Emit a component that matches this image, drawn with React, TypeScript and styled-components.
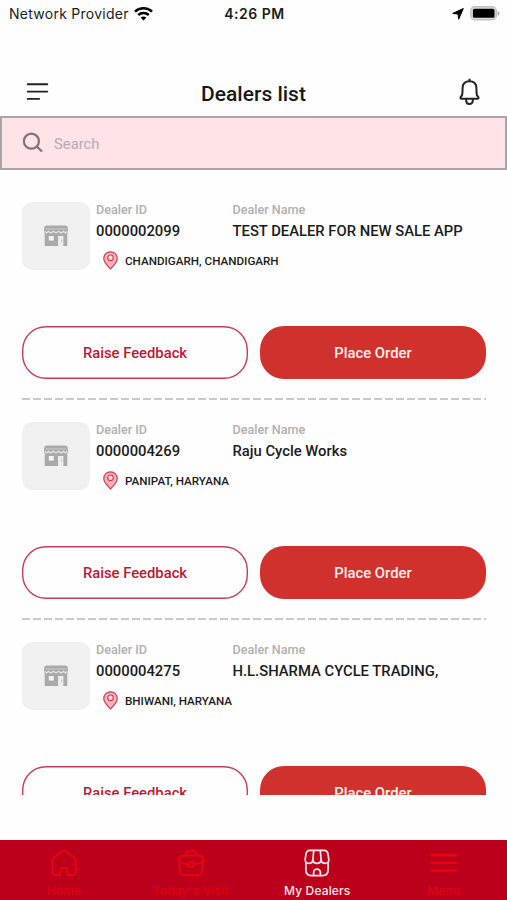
import React from "react";
import styled, { createGlobalStyle } from "styled-components";

const GlobalStyle = createGlobalStyle`
  *, *::before, *::after { box-sizing: border-box; }
  body { margin: 0; background: #fefefe; font-family: Roboto, sans-serif; }
  button, input { font-family: inherit; }
`;

const Screen = styled.div`
  display: flex;
  flex-direction: column;
  width: 507px;
  height: 900px;
  overflow: hidden;
  background: #fefefe;
`;

const StatusBar = styled.div`
  display: grid;
  grid-template-columns: 1fr auto 1fr;
  align-items: center;
  height: 28px;
  flex: none;
  padding: 0 7px 0 9px;
  color: #1b1b1b;
  font: 400 14px/28px Inter, sans-serif;
`;

const Carrier = styled.div`
  display: flex;
  align-items: center;
  gap: 5px;
  letter-spacing: 0.26px;
  white-space: nowrap;
`;

const Clock = styled.div`
  font-weight: 600;
  font-size: 14px;
  letter-spacing: 0.5px;
`;

const StatusIcons = styled.div`
  display: flex;
  align-items: center;
  justify-content: flex-end;
  gap: 6px;
`;

const Header = styled.header`
  display: grid;
  grid-template-columns: 1fr auto 1fr;
  align-items: start;
  flex: none;
  height: 88px;
  padding: 50px 26px 0;

  > :last-child { justify-self: end; }
`;

const IconButton = styled.button`
  display: flex;
  padding: 0;
  border: 0;
  background: none;
  color: #222;
`;

const Title = styled.h1`
  margin: 4px 0 0;
  color: #181818;
  font-size: 21px;
  font-weight: 500;
  line-height: 24px;
`;

const SearchBox = styled.label`
  display: flex;
  align-items: center;
  gap: 10px;
  flex: none;
  height: 54px;
  padding: 0 20px;
  border: 2px solid #aaa4a6;
  background: #ffe3e6;
`;

const SearchInput = styled.input`
  flex: 1;
  padding: 1px 0 0;
  border: 0;
  outline: 0;
  background: none;
  font-size: 14.8px;
  &::placeholder { color: #b9abae; opacity: 1; }
`;

const DealerList = styled.main`
  flex: none;
  height: 625px;
  padding: 10px 21px 0 22px;
  overflow: hidden;
`;

const Card = styled.article`
  display: flex;
  flex-direction: column;
  height: 220px;
  padding-top: 22px;
`;

const Summary = styled.div`
  display: flex;
  gap: 6px;
`;

const Thumb = styled.div`
  display: flex;
  align-items: center;
  justify-content: center;
  flex: none;
  width: 68px;
  height: 68px;
  border-radius: 10px;
  background: #f0f0f0;
`;

const Details = styled.div`
  flex: 1;
  min-width: 0;
`;

const Fields = styled.div`
  display: grid;
  grid-template-columns: 136.5px 1fr;
`;

const Label = styled.div`
  color: #b0b0b0;
  font-size: 12.6px;
  font-weight: 500;
  line-height: 15px;
`;

const Value = styled.div`
  margin-top: 4px;
  color: #1b1b1b;
  font-size: 14.8px;
  font-weight: 500;
  line-height: 20px;
  white-space: nowrap;
`;

const Place = styled.div`
  display: flex;
  align-items: center;
  gap: 7px;
  height: 20px;
  margin-top: 9.5px;
  padding-left: 7px;
  color: #1b1b1b;
  font-size: 11.65px;
  font-weight: 500;
`;

const Actions = styled.div`
  display: grid;
  grid-template-columns: 226px 226px;
  gap: 12px;
  margin-top: auto;
  margin-bottom: 18.6px;
`;

const ActionButton = styled.button<{ $filled?: boolean }>`
  height: 53px;
  padding: 0;
  border: 0;
  border-radius: 24px;
  box-shadow: ${({ $filled }) => ($filled ? "none" : "inset 0 0 0 1.4px #c73b55")};
  background: ${({ $filled }) => ($filled ? "#d0312d" : "#fefefe")};
  color: ${({ $filled }) => ($filled ? "#fdeeed" : "#bd1736")};
  font-size: 14.8px;
  font-weight: 500;
`;

const Divider = styled.div`
  flex: none;
  height: 2px;
  background: repeating-linear-gradient(90deg, #c9c9c9 0 8px, transparent 8px 11px);
`;

const TabBar = styled.nav`
  display: grid;
  grid-template-columns: repeat(4, 126.5px);
  flex: none;
  height: 60px;
  margin-top: auto;
  padding-left: 1px;
  background: #bc001b;
`;

const Tab = styled.a<{ $active?: boolean }>`
  display: flex;
  flex-direction: column;
  align-items: center;
  gap: 6px;
  padding-top: 9px;
  color: ${({ $active }) => ($active ? "#ffe9ed" : "#ef0011")};
`;

const TabLabel = styled.span<{ $active?: boolean }>`
  color: ${({ $active }) => ($active ? "#ffe9ed" : "#e00012")};
  font: 500 12px/15px Inter, sans-serif;
  letter-spacing: 0.15px;
  white-space: nowrap;
`;

const WifiIcon = () => (
  <svg width="19" height="14" viewBox="0 0 19 14" fill="none" stroke="#000" strokeWidth="2.5">
    <path d="M1 4.7C5.7.2 13.3.2 18 4.7M4.2 8c3-2.8 7.6-2.8 10.6 0" />
    <path d="M6.6 10.6c1.7-1.4 4.1-1.4 5.8 0L9.5 13.5Z" fill="#000" stroke="none" />
  </svg>
);

const LocationIcon = () => (
  <svg width="12" height="12" viewBox="0 0 12 12">
    <path d="M11.3.5 6.7 11.2 6 6 .7 5.4Z" fill="#000" stroke="#000" strokeLinejoin="round" />
  </svg>
);

const BatteryIcon = () => (
  <svg width="30" height="16" viewBox="0 0 30 16">
    <rect x=".8" y=".8" width="25.5" height="13" rx="4" fill="#dedede" stroke="#c2c2c2" strokeWidth="1.4" />
    <rect x="2.9" y="2.8" width="21.6" height="9" rx="1.6" />
    <path d="M27.6 5c2.5.8 2.5 4 0 4.8Z" fill="#aaa" />
  </svg>
);

const DrawerIcon = () => (
  <svg width="24" height="26" viewBox="0 0 24 26" stroke="currentColor" strokeWidth="1.9" strokeLinecap="round">
    <path d="M1.7 6.3h19.6M1.7 13.6h19.6M1.7 20.9h11.4" />
  </svg>
);

const BellIcon = () => (
  <svg width="23" height="28" viewBox="0 0 23 28" fill="none" stroke="currentColor" strokeWidth="2" strokeLinejoin="round">
    <path d="M11.5 3.2c-4.7 0-6.8 3-6.9 6.8l-.2 5.2c0 1.7-.7 2.8-1.5 3.5-.9.9-.5 2 .8 2h15.6c1.3 0 1.7-1.1.8-2-.8-.7-1.5-1.8-1.5-3.5l-.2-5.2c-.1-3.8-2.2-6.8-6.9-6.8Z" />
    <path d="M11.5 .8v2.6M8.2 21v1.8c0 4.3 6.6 4.3 6.6 0V21" />
  </svg>
);

const SearchIcon = () => (
  <svg width="22" height="22" viewBox="0 0 22 22" fill="none" stroke="#807276" strokeWidth="2.2">
    <circle cx="9.4" cy="9.2" r="7.5" />
    <path d="m14.8 14.5 5.2 5" />
  </svg>
);

const StoreThumbIcon = () => (
  <svg width="24" height="22" viewBox="0 0 24 22" fill="#a9a9a9">
    <path d="M2.4.5h19.2Q23.6.5 24 3.4V7q-.4 2-2.4 2H2.4Q.4 9 0 7V3.4Q.4.5 2.4.5Z" />
    <path d="M.7 8.5H23.3V21H.7Z" />
    <path d="M1.2 4h21.6" stroke="#d4d4d4" strokeWidth=".8" />
    <path d="m.8 6.2 1.7 1.7 2-1.7 2.4 1.7 2.5-1.7 2.6 1.7 2.6-1.7L17 7.9l2.5-1.7 2 1.7 1.7-1.7" fill="none" stroke="#e6e6e6" strokeWidth="1.2" />
    <path d="M4.8 11h5v4.6h-5Z" fill="#f3f3f3" />
    <path d="M14 11h5.4v10.2H14Z" fill="#ececec" />
    <path d="M17.8 14.5v2.5" stroke="#bbb" strokeWidth=".9" />
  </svg>
);

const PinIcon = () => (
  <svg width="15" height="19" viewBox="0 0 15 19" fill="#f8b0b9" stroke="#cb4057" strokeWidth="1.2">
    <path d="M7.5.8a6.6 6.6 0 0 0-6.7 6.6c0 4.8 4.7 7.8 6.7 10.6 2-2.8 6.7-5.8 6.7-10.6A6.6 6.6 0 0 0 7.5.8Z" />
    <circle cx="7.5" cy="6.8" r="2.8" fill="#fbdce0" />
  </svg>
);

const tabSvg = {
  width: 28,
  height: 28,
  viewBox: "0 0 28 28",
  fill: "none",
  stroke: "currentColor",
  strokeWidth: 1.7,
  strokeLinejoin: "round" as const,
  strokeLinecap: "round" as const,
};

const HomeIcon = () => (
  <svg {...tabSvg}>
    <path d="M12.3 2.1a3 3 0 0 1 3.4 0l8.3 6.4a3 3 0 0 1 1.6 2.4v12.3a3 3 0 0 1-3 3h-3.1a2 2 0 0 1-2-2v-3.5a1.8 1.8 0 0 0-1.8-1.8h-3.4a1.8 1.8 0 0 0-1.8 1.8v3.5a2 2 0 0 1-2 2H5.4a3 3 0 0 1-3-3V10.9A3 3 0 0 1 4 8.5Z" />
  </svg>
);

const BriefcaseIcon = () => (
  <svg {...tabSvg}>
    <path d="M5 6.7h18a3 3 0 0 1 3 3.3l-.9 12.4a4 4 0 0 1-4 3.8H6.9a4 4 0 0 1-4-3.8L2 10a3 3 0 0 1 3-3.3ZM9 6.4V4.7a3 3 0 0 1 3-3h4a3 3 0 0 1 3 3v1.7" />
    <path d="M2.2 12c2.2 2.2 5.3 3.2 8.9 3.4M25.8 12c-2.2 2.2-5.3 3.2-8.9 3.4" />
    <circle cx="14" cy="15.4" r="2.9" />
  </svg>
);

const ShopIcon = () => (
  <svg {...tabSvg}>
    <path d="M7 1.4h14c2.7 0 3.7 1.5 4 3.8l.8 5.2c.3 2.3-1.2 4-3.7 4-2.4 0-3.8-1.5-4-3.8-.2 2.3-1.8 3.8-4.1 3.8s-3.9-1.5-4.1-3.8c-.2 2.3-1.6 3.8-4 3.8-2.5 0-4-1.7-3.7-4L3 5.2c.3-2.3 1.3-3.8 4-3.8Z" />
    <path d="M10.7 1.6 9.9 10.6M17.3 1.6l.8 9M2.9 13.6v7.2c0 3.9 1.8 5.8 5.6 5.8h11c3.8 0 5.6-1.9 5.6-5.8v-7.2M10.6 26.4v-2.8a3.4 3.4 0 0 1 6.8 0v2.8" />
  </svg>
);

const MenuIcon = () => (
  <svg {...tabSvg} strokeWidth={2.3} strokeLinecap="butt">
    <path d="M1 6h26M1 13.8h26M1 21.6h26" />
  </svg>
);

const dealers = [
  { id: "0000002099", name: "TEST DEALER FOR NEW SALE APP", place: "CHANDIGARH, CHANDIGARH" },
  { id: "0000004269", name: "Raju Cycle Works", place: "PANIPAT, HARYANA" },
  { id: "0000004275", name: "H.L.SHARMA CYCLE TRADING,", place: "BHIWANI, HARYANA" },
];

const tabs = [
  { label: "Home", Icon: HomeIcon },
  { label: "Today's Visit", Icon: BriefcaseIcon },
  { label: "My Dealers", Icon: ShopIcon, active: true },
  { label: "Menu", Icon: MenuIcon },
];

export default function App() {
  return (
    <Screen>
      <GlobalStyle />
      <StatusBar>
        <Carrier>Network Provider <WifiIcon /></Carrier>
        <Clock>4:26 PM</Clock>
        <StatusIcons><LocationIcon /><BatteryIcon /></StatusIcons>
      </StatusBar>
      <Header>
        <IconButton aria-label="Open drawer"><DrawerIcon /></IconButton>
        <Title>Dealers list</Title>
        <IconButton aria-label="Notifications"><BellIcon /></IconButton>
      </Header>
      <SearchBox>
        <SearchIcon />
        <SearchInput placeholder="Search" />
      </SearchBox>
      <DealerList>
        {dealers.map(({ id, name, place }) => (
          <Card key={id}>
            <Summary>
              <Thumb><StoreThumbIcon /></Thumb>
              <Details>
                <Fields>
                  <div>
                    <Label>Dealer ID</Label>
                    <Value>{id}</Value>
                  </div>
                  <div>
                    <Label>Dealer Name</Label>
                    <Value>{name}</Value>
                  </div>
                </Fields>
                <Place><PinIcon />{place}</Place>
              </Details>
            </Summary>
            <Actions>
              <ActionButton>Raise Feedback</ActionButton>
              <ActionButton $filled>Place Order</ActionButton>
            </Actions>
            <Divider />
          </Card>
        ))}
      </DealerList>
      <TabBar>
        {tabs.map(({ label, Icon, active }) => (
          <Tab key={label} $active={active}>
            <Icon />
            <TabLabel $active={active}>{label}</TabLabel>
          </Tab>
        ))}
      </TabBar>
    </Screen>
  );
}
